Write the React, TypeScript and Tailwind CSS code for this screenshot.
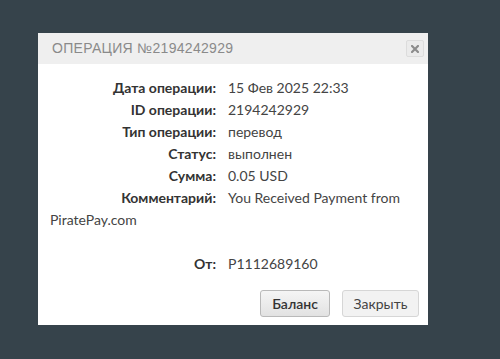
import React from 'react';

const rows: { label: string; value: string }[] = [
  { label: 'Дата операции:', value: '15 Фев 2025 22:33' },
  { label: 'ID операции:', value: '2194242929' },
  { label: 'Тип операции:', value: 'перевод' },
  { label: 'Статус:', value: 'выполнен' },
  { label: 'Сумма:', value: '0.05 USD' },
];

const Label: React.FC<{ children: React.ReactNode }> = ({ children }) => (
  <span className="inline-block w-[166px] text-right font-bold text-[#333] mr-[12px]">{children}</span>
);

const App: React.FC = () => {
  return (
    <div className="w-[500px] h-[359px] bg-[#36434b] overflow-hidden pt-[33px] pl-[38px]" style={{ fontFamily: 'Lato, "Open Sans", sans-serif' }}>
      <div className="w-[390px] h-[292px] bg-white flex flex-col">
        <div className="h-[31px] bg-[#efefef] flex items-center justify-between pl-[14px] pr-[4px]">
          <span className="text-[14px] tracking-[0.3px] text-[#8a8a8a] uppercase" style={{ fontFamily: '"Liberation Sans", Arial, sans-serif' }}>
            Операция №2194242929
          </span>
          <button className="w-[18px] h-[17px] border border-[#dcdcdc] bg-[#ebebeb] rounded-[2px] flex items-center justify-center">
            <svg width="8" height="8" viewBox="0 0 8 8">
              <path d="M1 1L7 7M7 1L1 7" stroke="#8c8c8c" strokeWidth="2.2" strokeLinecap="square" />
            </svg>
          </button>
        </div>
        <div className="pt-[13px] pl-[12px] pr-[18px] text-[14px] leading-[22px] text-[#444]">
          {rows.map((r) => (
            <div key={r.label}>
              <Label>{r.label}</Label>
              <span>{r.value}</span>
            </div>
          ))}
          <div>
            <Label>Комментарий:</Label>
            <span>You Received Payment from</span>
          </div>
          <div>PiratePay.com</div>
          <div className="h-[22px]" />
          <div>
            <Label>От:</Label>
            <span>P1112689160</span>
          </div>
        </div>
        <div className="flex justify-end gap-[12px] pr-[9px] mt-[15px]">
          <button className="h-[27px] w-[70px] rounded-[3px] border border-[#b9b9b9] bg-gradient-to-b from-[#f5f5f5] to-[#e2e2e2] text-[14px] font-semibold text-[#333]">
            Баланс
          </button>
          <button className="h-[27px] w-[77px] rounded-[3px] border border-[#d6d6d6] bg-[#f2f2f2] text-[14px] text-[#444]">
            Закрыть
          </button>
        </div>
      </div>
    </div>
  );
};

export default App;
